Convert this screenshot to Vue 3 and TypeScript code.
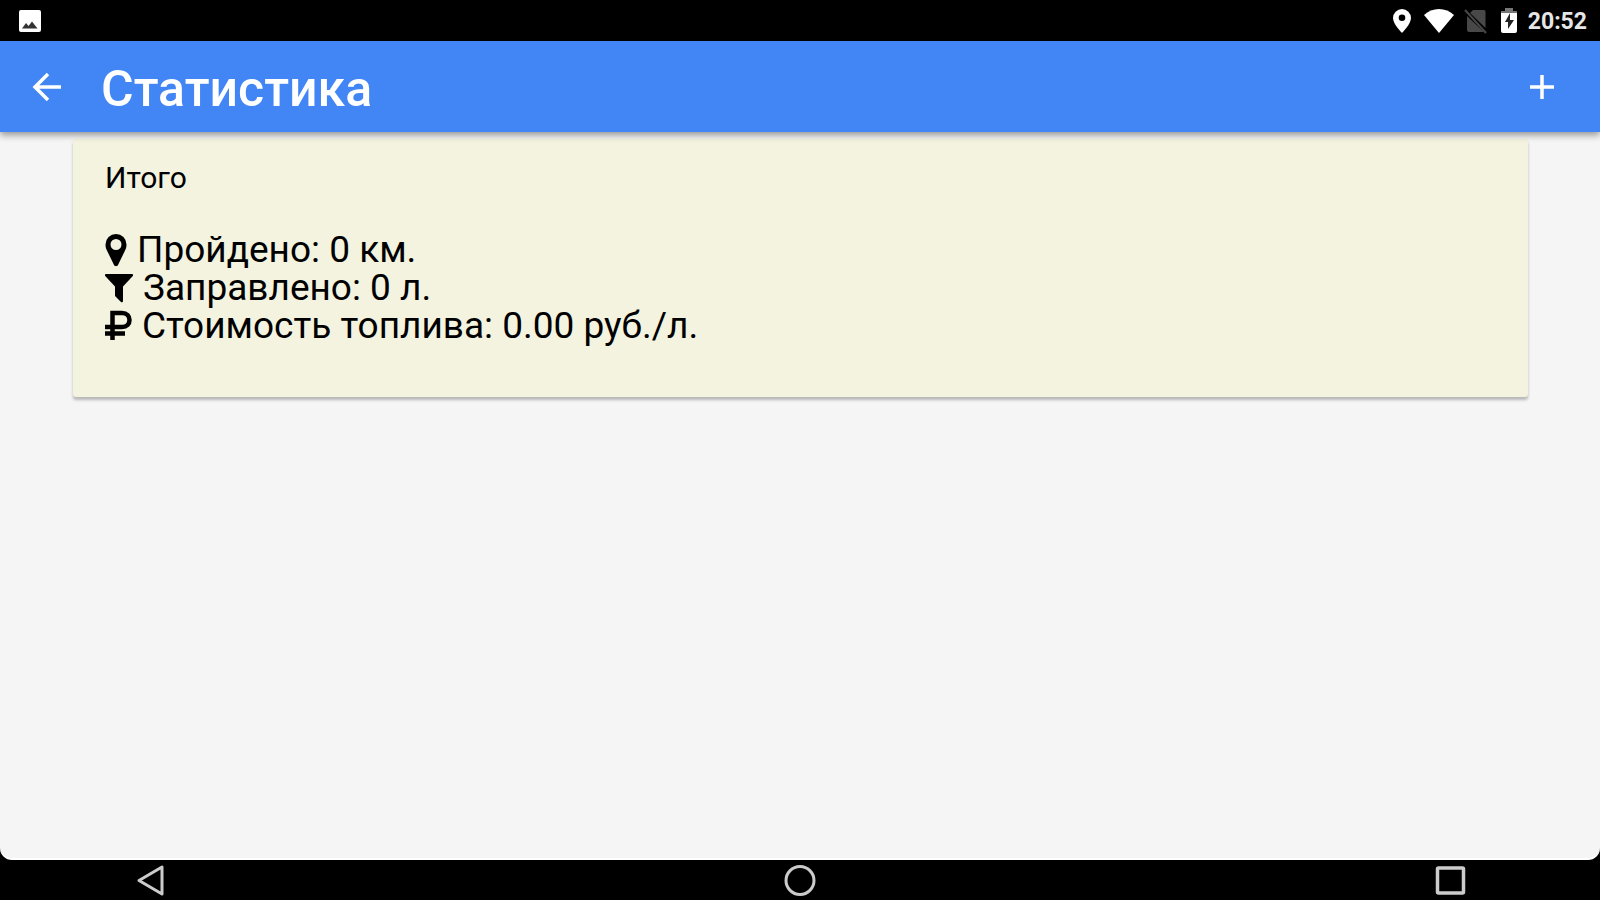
<script setup lang="ts">
type StatIcon = 'marker' | 'filter' | 'ruble'

interface Stat {
  icon: StatIcon
  label: string
  value: string
}

const clock = '20:52'
const title = 'Статистика'
const stats: Stat[] = [
  { icon: 'marker', label: 'Пройдено', value: '0 км.' },
  { icon: 'filter', label: 'Заправлено', value: '0 л.' },
  { icon: 'ruble', label: 'Стоимость топлива', value: '0.00 руб./л.' },
]
</script>

<template>
  <div class="screen">
    <div class="status">
      <svg class="picture" width="24" height="24" viewBox="0 0 24 24" aria-hidden="true">
        <rect x="1" y="1" width="22" height="22" rx="2" fill="#fff" />
        <path d="M4 19.500 8 14l2.500 3L14 12.500l5.500 7z" fill="#333" />
      </svg>
      <div class="indicators">
        <svg width="20" height="26" viewBox="0 0 20 26" aria-hidden="true">
          <path fill="#fff" fill-rule="evenodd" d="M10 1a9 9 0 0 0-9 9c0 6 9 15 9 15s9-9 9-15a9 9 0 0 0-9-9zm0 5.500a3.300 3.300 0 1 1 0 6.600 3.300 3.300 0 0 1 0-6.600z" />
        </svg>
        <svg class="wifi" width="30" height="26" viewBox="0 0 30 26" aria-hidden="true">
          <path fill="#fff" d="M0 7C8-1 22-1 30 7L15 25z" />
        </svg>
        <svg class="sim" width="24" height="26" viewBox="0 0 24 26" aria-hidden="true">
          <path fill="#484848" d="M9 2h11a1.500 1.500 0 0 1 1.500 1.500V20L6 5zM3 8l17 16H5a2 2 0 0 1-2-2z" />
          <path stroke="#484848" stroke-width="2" d="M1 2l21 23" />
        </svg>
        <svg class="battery" width="18" height="26" viewBox="0 0 18 26" aria-hidden="true">
          <path fill="#777" d="M5 0h8v3h4v3H1V3h4z" />
          <path fill="#fff" d="M1 5h16v18a2 2 0 0 1-2 2H3a2 2 0 0 1-2-2z" />
          <path fill="#222" d="M10 5v7h4l-6 9v-7H5z" />
        </svg>
        <span class="clock">{{ clock }}</span>
      </div>
    </div>

    <header class="bar">
      <button class="icon-button" type="button" aria-label="Назад">
        <svg width="30" height="30" viewBox="0 0 30 30" aria-hidden="true">
          <path d="M29 15H3M16 2 3 15l13 13" fill="none" stroke="#fff" stroke-width="3.500" />
        </svg>
      </button>
      <h1 class="title">{{ title }}</h1>
      <button class="icon-button" type="button" aria-label="Добавить">
        <svg width="26" height="26" viewBox="0 0 26 26" aria-hidden="true">
          <path d="M1 13h24M13 1v24" fill="none" stroke="#fff" stroke-width="3.500" />
        </svg>
      </button>
    </header>

    <main class="content">
      <section class="card">
        <h2 class="card-title">Итого</h2>
        <ul class="stats">
          <li v-for="stat in stats" :key="stat.icon" class="stat">
            <svg v-if="stat.icon === 'marker'" class="glyph" width="22" height="34" viewBox="0 0 22 34" aria-hidden="true">
              <path fill="#000" fill-rule="evenodd" d="M11 1A10.500 10.500 0 0 0 .5 11.500c0 3 .7 4.500 1.700 6.500L9 32c.8 1.600 3.200 1.600 4 0l6.800-14c1-2 1.700-3.500 1.700-6.500A10.500 10.500 0 0 0 11 1zm0 5a5.500 5.500 0 1 1 0 11 5.500 5.500 0 0 1 0-11z" />
            </svg>
            <svg v-else-if="stat.icon === 'filter'" class="glyph" width="28" height="34" viewBox="0 0 28 34" aria-hidden="true">
              <path fill="#000" d="M1 3h26c1.200 0 1.500 1.300.8 2L18 15.500V30c0 1.300-1.200 1.700-2 1l-5-5c-.6-.6-1-1-1-2v-8.500L.2 5C-.5 4.300-.2 3 1 3z" />
            </svg>
            <svg v-else class="glyph" width="27" height="34" viewBox="0 0 27 34" aria-hidden="true">
              <path fill="none" stroke="#000" stroke-width="4.500" d="M7.500 31V4H17c5 0 7.500 3 7.500 7S22 18 17 18H0M0 24.500h20" />
            </svg>
            <span>{{ stat.label }}: {{ stat.value }}</span>
          </li>
        </ul>
      </section>
    </main>

    <nav class="system">
      <button class="system-button" type="button" aria-label="Назад">
        <svg width="32" height="34" viewBox="0 0 32 34" aria-hidden="true">
          <path d="M28 4v27L5 17.500z" fill="none" stroke="#ccc" stroke-width="3" stroke-linejoin="round" />
        </svg>
      </button>
      <button class="system-button" type="button" aria-label="Домой">
        <svg width="32" height="34" viewBox="0 0 32 34" aria-hidden="true">
          <circle cx="16" cy="17.500" r="14" fill="none" stroke="#ccc" stroke-width="3" />
        </svg>
      </button>
      <button class="system-button" type="button" aria-label="Недавние приложения">
        <svg width="32" height="34" viewBox="0 0 32 34" aria-hidden="true">
          <rect x="3.500" y="5" width="26" height="25" rx="1" fill="none" stroke="#ccc" stroke-width="3.500" />
        </svg>
      </button>
    </nav>
  </div>
</template>

<style>
body {
  margin: 0;
  background: #000;
}
</style>

<style scoped>
.screen {
  display: flex;
  flex-direction: column;
  min-height: 100vh;
  background: #000;
  font-family: Roboto, "Noto Sans", sans-serif;
  color: #000;
}

.status {
  display: flex;
  align-items: center;
  justify-content: space-between;
  height: 41px;
  padding: 0 13px 0 18px;
  box-sizing: border-box;
}

.indicators {
  display: flex;
  align-items: center;
}

.wifi {
  margin-left: 12px;
}

.sim {
  margin-left: 10px;
}

.battery {
  margin-left: 12px;
}

.clock {
  margin-left: 10px;
  padding-top: 2px;
  color: #e6e6e6;
  font-size: 23px;
  line-height: 38px;
  font-weight: 700;
}

.bar {
  z-index: 1;
  display: flex;
  align-items: center;
  height: 91px;
  padding: 0 41px 0 28px;
  box-sizing: border-box;
  background: #4285f4;
  box-shadow: 0 3px 7px rgba(0, 0, 0, 0.4);
}

.icon-button {
  display: flex;
  align-items: center;
  justify-content: center;
  padding: 4px;
  border: 0;
  background: none;
}

.title {
  flex: 1;
  margin: 0;
  padding: 4px 0 0 35px;
  color: #fff;
  font-size: 50px;
  line-height: 60px;
  font-weight: 500;
}

.content {
  flex: 1;
  padding: 7px 72px 0 73px;
  background: #f5f5f5;
  border-bottom: 2px solid #fff;
  border-radius: 0 0 12px 12px;
}

.card {
  padding: 20px 32px 52px;
  background: #f3f3df;
  border-radius: 3px;
  box-shadow: 0 3px 3px rgba(0, 0, 0, 0.25);
}

.card-title {
  margin: 0 0 34px;
  font-size: 30px;
  line-height: 38px;
  font-weight: 400;
}

.stats {
  margin: 0;
  padding: 0;
  list-style: none;
}

.stat {
  display: flex;
  align-items: center;
  gap: 10px;
  font-size: 37px;
  line-height: 38px;
}

.glyph {
  flex: none;
}

.system {
  display: flex;
  align-items: center;
  justify-content: space-between;
  height: 40px;
  padding: 0 134px;
}

.system-button {
  display: flex;
  padding: 0;
  border: 0;
  background: none;
}
</style>
